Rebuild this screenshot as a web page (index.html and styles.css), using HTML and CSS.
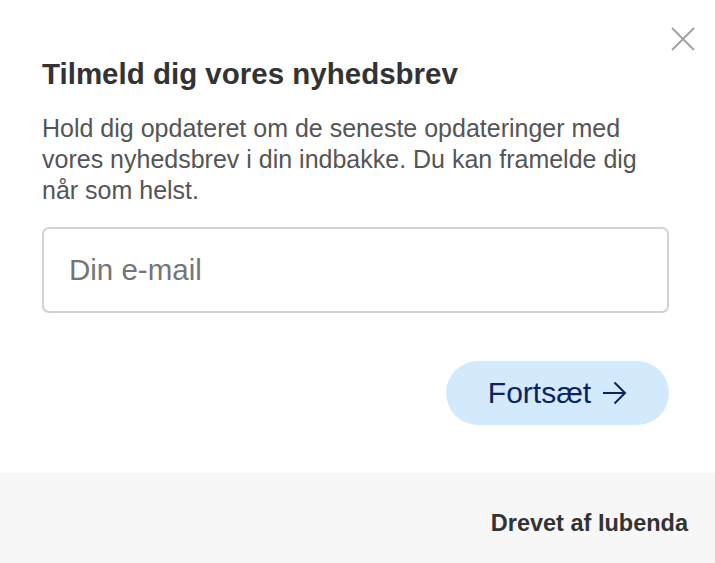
FILE: index.html
```html
<!DOCTYPE html>
<html lang="da">
<head>
<meta charset="utf-8">
<link rel="stylesheet" href="styles.css">
</head>
<body>
<div class="dialog">
  <div class="main">
    <button class="close" aria-label="Luk">
      <svg width="26" height="26" viewBox="0 0 26 26"><path d="M2 2L24 24M24 2L2 24" stroke="#a0a0a0" stroke-width="1.8" fill="none"/></svg>
    </button>
    <h1 class="title">Tilmeld dig vores nyhedsbrev</h1>
    <p class="desc">Hold dig opdateret om de seneste opdateringer med vores nyhedsbrev i din indbakke. Du kan framelde dig når som helst.</p>
    <input class="email" type="email" placeholder="Din e-mail">
    <div class="actions">
      <button class="submit">Fortsæt <svg width="25" height="24" viewBox="0 0 25 24"><path d="M1 12H23M12.5 1.5L23 12L12.5 22.5" stroke="#0b2361" stroke-width="2" fill="none"/></svg></button>
    </div>
  </div>
  <div class="footer">Drevet af Iubenda</div>
</div>
</body>
</html>
```
FILE: styles.css
```css
html, body {
  margin: 0;
  padding: 0;
  background: #fff;
}
body {
  font-family: "Liberation Sans", Arial, sans-serif;
}
.dialog {
  width: 715px;
  height: 563px;
  display: flex;
  flex-direction: column;
}
.main {
  position: relative;
  flex: 1;
  padding: 57px 46px 0 42px;
  display: flex;
  flex-direction: column;
}
.close {
  position: absolute;
  top: 26px;
  right: 19px;
  padding: 0;
  border: 0;
  background: none;
  width: 26px;
  height: 26px;
}
.close svg { display: block; }
.title {
  margin: 0;
  font-size: 29.5px;
  font-weight: bold;
  color: #333;
  line-height: 34px;
}
.desc {
  margin: 22px 0 0;
  font-size: 25px;
  line-height: 31px;
  color: #555;
}
.email {
  margin-top: 21px;
  box-sizing: border-box;
  height: 86px;
  border: 2px solid #d2d2d2;
  border-radius: 7px;
  padding: 0 25px;
  font-family: inherit;
  font-size: 29.5px;
  color: #333;
  outline: none;
}
.email::placeholder { color: #757575; }
.actions {
  display: flex;
  justify-content: flex-end;
  margin-top: 48px;
}
.submit {
  display: flex;
  align-items: center;
  gap: 11px;
  height: 64px;
  width: 223px;
  justify-content: center;
  border: 0;
  border-radius: 32px;
  background: #d3eafc;
  color: #0b2361;
  font-family: inherit;
  font-size: 30px;
  padding: 0;
}
.submit svg { display: block; }
.footer {
  height: 90px;
  box-sizing: border-box;
  padding: 10px 27px 0 0;
  background: #f7f7f7;
  display: flex;
  align-items: center;
  justify-content: flex-end;
  font-size: 23.5px;
  font-weight: bold;
  color: #333;
}
```
